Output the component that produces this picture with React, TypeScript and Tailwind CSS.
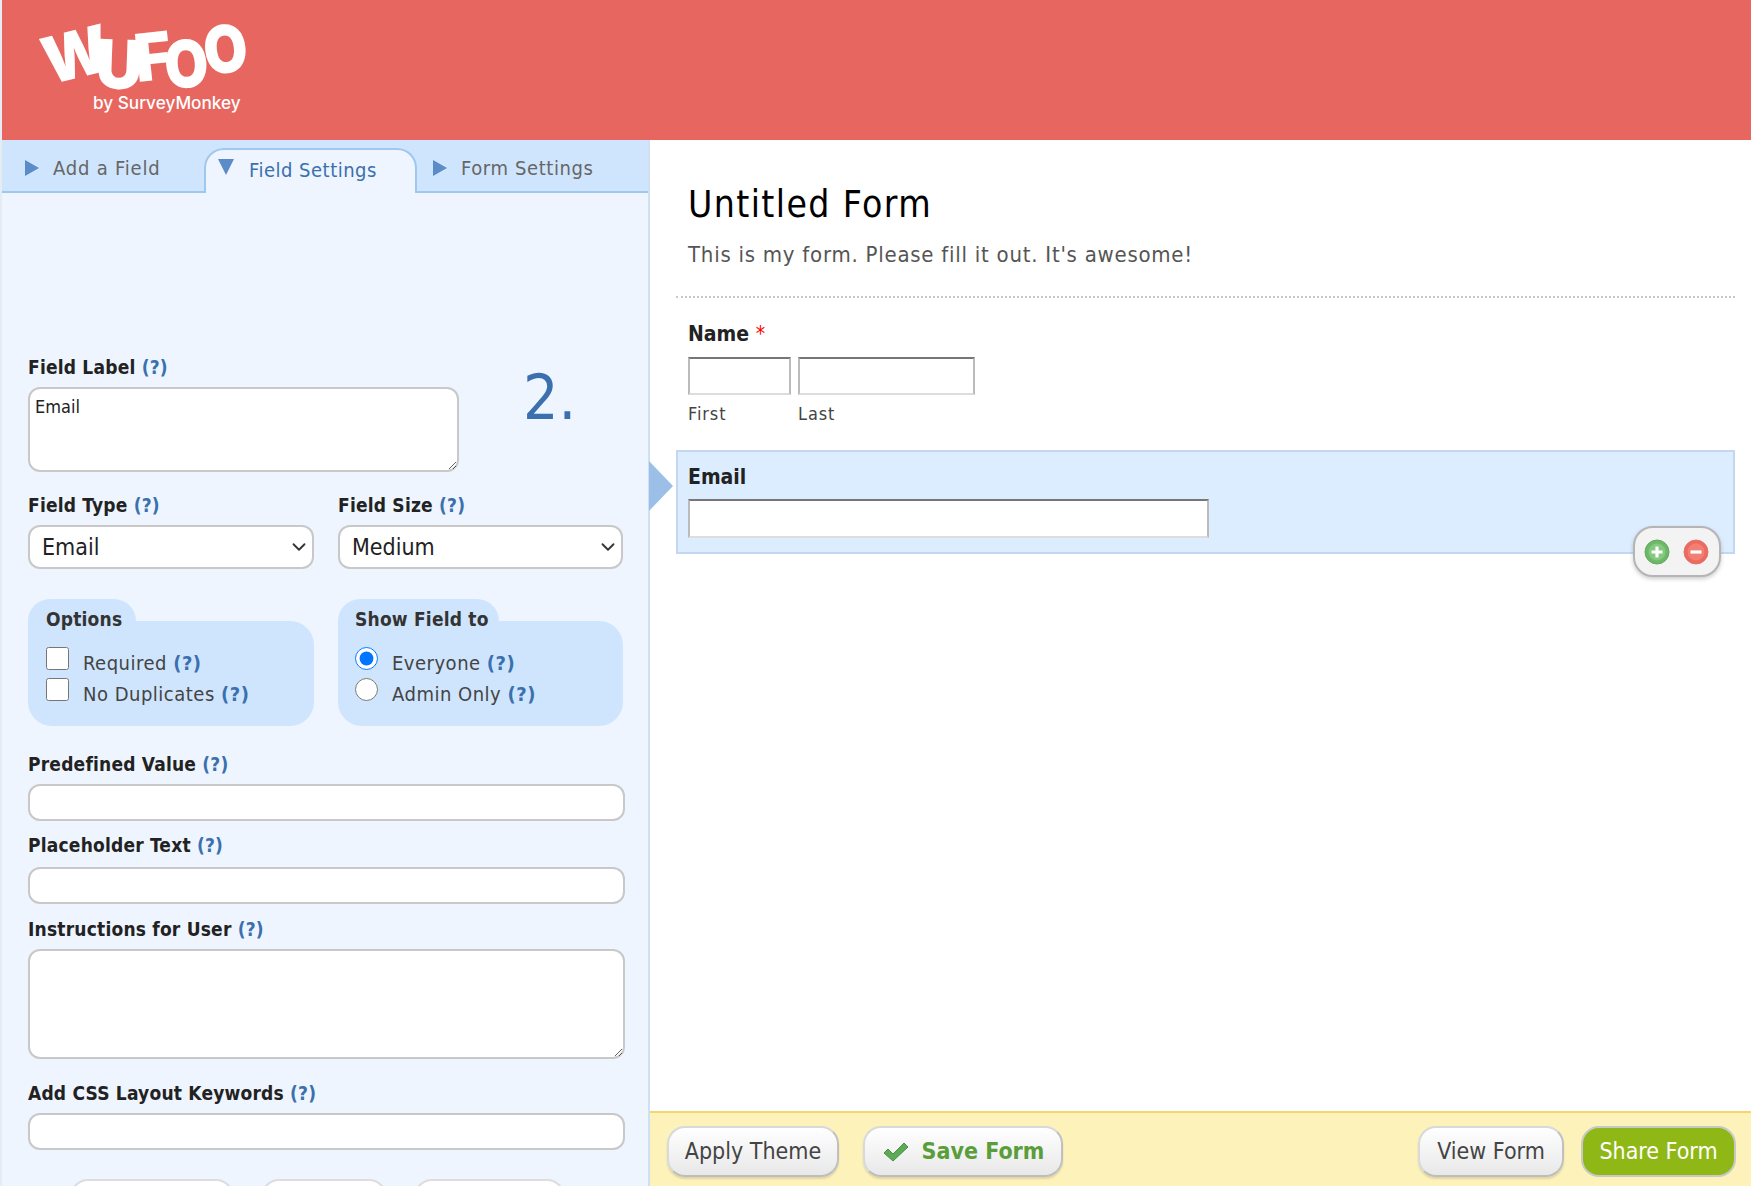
import React from 'react';
import { ChevronDown } from 'lucide-react';

const Help = () => <span className="text-[#3a70ad] font-bold">(?)</span>;

function FieldLabel({ children, className = '' }: { children: React.ReactNode; className?: string }) {
  return (
    <label className={`block text-[19px] leading-[24px] font-bold text-[#222] tracking-[0.2px] ${className}`}>
      {children} <Help />
    </label>
  );
}

const boxInput = 'block bg-white border-[2px] border-[#c8c8c8] rounded-[12px] outline-none';

function WufooLogo() {
  return (
    <svg width="260" height="125" viewBox="0 0 260 125" className="block">
      <g fill="#fff" fontFamily="Inter, sans-serif" fontWeight="900">
        <text transform="translate(47 85) rotate(-14) scale(1.02 1.08)" fontSize="60">W</text>
        <text transform="translate(93 88) rotate(2) scale(0.95 1)" fontSize="68">U</text>
        <text transform="translate(135 82) rotate(-6) scale(0.95 1)" fontSize="66">F</text>
        <text transform="translate(164 89) rotate(-4) scale(0.86 1)" fontSize="66">O</text>
        <text transform="translate(204 75) rotate(-6) scale(0.86 1)" fontSize="66">O</text>
      </g>
      <text x="91" y="109" fill="#fff" fontFamily="Inter, sans-serif" fontWeight="500" fontSize="17.2">by SurveyMonkey</text>
    </svg>
  );
}

function TabArrow({ down }: { down?: boolean }) {
  return (
    <svg width="16" height="16" viewBox="0 0 16 16" className="shrink-0">
      {down ? <path d="M0 0H16L8 16Z" fill="#5b8cc8" /> : <path d="M1 0L15 8L1 16Z" fill="#5b8cc8" />}
    </svg>
  );
}

function RoundIcon({ kind }: { kind: 'plus' | 'minus' }) {
  const plus = kind === 'plus';
  return (
    <svg width="26" height="26" viewBox="0 0 26 26">
      <circle cx="13" cy="13" r="12" fill={plus ? '#6db868' : '#ec6a60'} stroke={plus ? '#62a85e' : '#e0766e'} strokeWidth="1" />
      <circle cx="13" cy="13" r="8.5" fill={plus ? '#83c97e' : '#f27f76'} />
      <path d={plus ? 'M13 7.5V18.5M7.5 13H18.5' : 'M7.5 13H18.5'} stroke="#fff" strokeWidth="3.2" />
    </svg>
  );
}

function SelectBox({ value }: { value: string }) {
  return (
    <div className="relative mt-[8px]">
      <select defaultValue={value} className={`${boxInput} appearance-none w-full h-[44px] pl-[12px] text-[23px] text-[#222]`}>
        <option>{value}</option>
      </select>
      <ChevronDown size={22} strokeWidth={2} className="absolute right-[4px] top-[11px] text-[#333] pointer-events-none" />
    </div>
  );
}

function OptionRow({ type, label, checked }: { type: 'checkbox' | 'radio'; label: string; checked?: boolean }) {
  return (
    <label className="flex h-[31px]">
      <input type={type} name={type === 'radio' ? 'show' : undefined} defaultChecked={checked} className="w-[23px] h-[23px] m-0" />
      <span className="ml-[14px] mt-[3px] leading-[26px]">
        {label} <Help />
      </span>
    </label>
  );
}

const pillBtn =
  'h-[51px] rounded-[18px] border-2 border-[#d9d9d9] border-r-[#c0c0c0] border-b-[#bdbdbd] bg-gradient-to-b from-white to-[#e8e8e8] shadow-[0_2px_2px_rgba(0,0,0,0.12)] text-[23px] flex items-center justify-center';

const fieldBox = 'block bg-white border-2 border-t-[#767676] border-l-[#bbb] border-r-[#bbb] border-b-[#ddd]';

export default function App() {
  return (
    <div className="h-screen w-full overflow-hidden flex flex-col bg-[#e6ecf4] pl-[2px] font-['DejaVu_Sans',sans-serif] [font-stretch:condensed]">
      <header className="h-[140px] shrink-0 bg-[#e7665f]">
        <WufooLogo />
      </header>

      <div className="flex-1 min-h-0 flex relative">
        <aside className="w-[648px] shrink-0 bg-[#eef5ff] border-r-2 border-[#cfe0f5] overflow-hidden">
          <nav className="h-[53px] bg-[#cfe5fd] border-b-2 border-[#a0c8ee] flex items-end text-[20px] tracking-[0.6px]">
            <div className="w-[202px] h-full flex items-center pl-[22px] pt-[4px] text-[#666]">
              <TabArrow />
              <span className="ml-[13px] tracking-[0.8px]">Add a Field</span>
            </div>
            <div className="w-[213px] h-[45px] -mb-[2px] bg-[#eef5ff] border-2 border-b-0 border-[#a0c8ee] rounded-t-[20px] flex items-start pl-[12px] pt-[9px] text-[#3a70ad]">
              <TabArrow down />
              <span className="ml-[15px] -mt-[2px] leading-[26px] tracking-[0.5px]">Field Settings</span>
            </div>
            <div className="h-full flex items-center pl-[15px] pt-[4px] text-[#666]">
              <TabArrow />
              <span className="ml-[13px]">Form Settings</span>
            </div>
          </nav>

          <div className="pl-[26px] pr-[24px] pt-[162px]">
            <div className="flex">
              <div className="w-[431px]">
                <FieldLabel>Field Label</FieldLabel>
                <textarea defaultValue="Email" className={`${boxInput} w-[431px] h-[85px] mt-[8px] px-[5px] py-[6px] text-[18px] leading-[24px] text-[#222]`} />
              </div>
              <div className="ml-[64px] mt-[11px] text-[62px] leading-[64px] text-[#3a70ad]">2.</div>
            </div>

            <div className="grid grid-cols-[286px_285px] gap-x-[24px] mt-[21px]">
              <div>
                <FieldLabel>Field Type</FieldLabel>
                <SelectBox value="Email" />
              </div>
              <div>
                <FieldLabel>Field Size</FieldLabel>
                <SelectBox value="Medium" />
              </div>
            </div>

            <div className="grid grid-cols-[286px_285px] gap-x-[24px] mt-[30px] text-[20px] tracking-[0.5px] text-[#444]">
              <fieldset>
                <legend className="h-[22px] w-[108px] px-[18px] pt-[8px] bg-[#cfe5fd] rounded-t-[24px] font-bold text-[#333] text-[19px] tracking-[0.2px] leading-[24px] whitespace-nowrap float-left relative">Options</legend>
                <div className="clear-both bg-[#cfe5fd] rounded-[24px] rounded-tl-none h-[105px] pl-[18px] pt-[26px]">
                  <OptionRow type="checkbox" label="Required" />
                  <OptionRow type="checkbox" label="No Duplicates" />
                </div>
              </fieldset>
              <fieldset>
                <legend className="h-[22px] w-[161px] pl-[17px] pt-[8px] bg-[#cfe5fd] rounded-t-[24px] font-bold text-[#333] text-[19px] tracking-[0.2px] leading-[24px] whitespace-nowrap float-left relative">Show Field to</legend>
                <div className="clear-both bg-[#cfe5fd] rounded-[24px] rounded-tl-none h-[105px] pl-[17px] pt-[26px]">
                  <OptionRow type="radio" label="Everyone" checked />
                  <OptionRow type="radio" label="Admin Only" />
                </div>
              </fieldset>
            </div>

            <FieldLabel className="mt-[26px]">Predefined Value</FieldLabel>
            <input className={`${boxInput} w-[597px] h-[37px] mt-[8px]`} />
            <FieldLabel className="mt-[12px]">Placeholder Text</FieldLabel>
            <input className={`${boxInput} w-[597px] h-[37px] mt-[10px]`} />
            <FieldLabel className="mt-[13px]">Instructions for User</FieldLabel>
            <textarea className={`${boxInput} w-[597px] h-[110px] mt-[8px]`} />
            <FieldLabel className="mt-[22px]">Add CSS Layout Keywords</FieldLabel>
            <input className={`${boxInput} w-[597px] h-[37px] mt-[8px]`} />

            <div className="flex mt-[29px] ml-[42px] gap-[27px]">
              <div className="w-[164px] h-[40px] shrink-0 bg-white border-2 border-[#ddd] rounded-[18px]" />
              <div className="w-[126px] h-[40px] shrink-0 bg-white border-2 border-[#ddd] rounded-[18px]" />
              <div className="w-[151px] h-[40px] shrink-0 bg-white border-2 border-[#ddd] rounded-[18px]" />
            </div>
          </div>
        </aside>

        <main className="flex-1 min-w-0 flex flex-col bg-white">
          <div className="flex-1 min-h-0 pl-[26px] pr-[16px]">
            <div className="pl-[12px] pt-[40px] pb-[27px] border-b-2 border-dotted border-[#c8c8c8]">
              <h1 className="text-[37px] leading-[50px] text-black tracking-[1.4px]">Untitled Form</h1>
              <p className="text-[22px] leading-[30px] mt-[10px] -mb-[1px] text-[#555] tracking-[0.75px]">This is my form. Please fill it out. It's awesome!</p>
            </div>
            <div className="pl-[12px] pt-[22px]">
              <div className="text-[21px] leading-[28px] font-bold text-[#222]">Name <span className="text-[#f00] font-normal">*</span></div>
              <div className="flex gap-[7px] mt-[9px]">
                <div>
                  <input className={`${fieldBox} w-[103px] h-[38px]`} />
                  <div className="text-[18px] leading-[24px] mt-[7px] text-[#444] tracking-[0.9px]">First</div>
                </div>
                <div>
                  <input className={`${fieldBox} w-[177px] h-[38px]`} />
                  <div className="text-[18px] leading-[24px] mt-[7px] text-[#444] tracking-[0.9px]">Last</div>
                </div>
              </div>
            </div>
            <div className="relative mt-[24px] h-[104px] bg-[#dcedff] border-2 border-[#c3d8f0] pl-[10px] pt-[11px]">
              <div className="text-[21px] leading-[28px] font-bold text-[#222]">Email</div>
              <input className={`${fieldBox} w-[521px] h-[39px] mt-[8px]`} />
              <div className="absolute -left-[29px] top-[9px] w-0 h-0 border-y-[25px] border-y-transparent border-l-[24px] border-l-[#9bbfe6]" />
              <div className="absolute right-[12px] top-[74px] w-[88px] h-[51px] bg-[#f3f3f3] border-2 border-[#b5b5b5] rounded-[20px] shadow-[0_2px_4px_rgba(0,0,0,0.2)] flex items-center justify-center gap-[13px] pr-[2px]">
                <RoundIcon kind="plus" />
                <RoundIcon kind="minus" />
              </div>
            </div>
          </div>

          <footer className="h-[75px] shrink-0 bg-[#fdf2ba] border-t-2 border-[#f7d46d] flex items-start pt-[13px] pl-[17px] pr-[15px]">
            <button className={`${pillBtn} w-[172px] text-[#444]`}>Apply Theme</button>
            <button className={`${pillBtn} w-[200px] ml-[24px] font-bold text-[#5a9e3c]`}>
              <svg width="28" height="24" viewBox="0 0 28 24" className="mr-[12px]">
                <path d="M2 13L6 9L11 14L22 3L26 7L11 21Z" fill="#5dab55" stroke="#4a8f45" strokeWidth="1" />
              </svg>
              Save Form
            </button>
            <button className={`${pillBtn} w-[146px] ml-auto text-[#444]`}>View Form</button>
            <button className="h-[51px] w-[155px] ml-[17px] rounded-[18px] border-2 border-[#c8c8c8] bg-[#8fb816] text-[23px] text-white flex items-center justify-center">Share Form</button>
          </footer>
        </main>
      </div>
    </div>
  );
}
